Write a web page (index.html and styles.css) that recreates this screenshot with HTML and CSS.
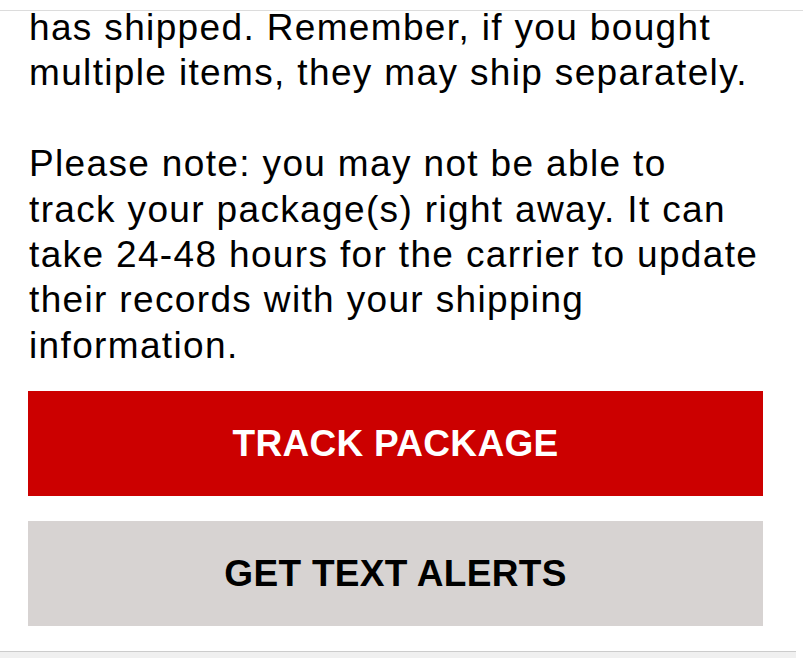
FILE: index.html
```html
<!DOCTYPE html>
<html lang="en">
<head>
<meta charset="utf-8">
<title>Shipping notice</title>
<link rel="stylesheet" href="styles.css">
</head>
<body>
<div class="page">
  <div class="content">
    <p class="copy">has shipped. Remember, if you bought multiple items, they may ship separately.</p>
    <p class="copy">Please note: you may not be able to track your package(s) right away. It can take 24-48 hours for the carrier to update their records with your shipping information.</p>
    <div class="actions">
      <a class="btn btn-primary" href="#">TRACK PACKAGE</a>
      <a class="btn btn-secondary" href="#">GET TEXT ALERTS</a>
    </div>
  </div>
  <div class="footer-bar"></div>
</div>
</body>
</html>
```
FILE: styles.css
```css
html, body {
  margin: 0;
  padding: 0;
  background: #ffffff;
}
body {
  font-family: "Liberation Sans", Arial, sans-serif;
  color: #000000;
  height: 658px;
  overflow: hidden;
}
.page {
  padding-top: 10px;
}
.content {
  border-top: 1px solid #dcdcdc;
  padding: 0 40px 0 28px;
}
.copy {
  margin: -6px 0 45.4px 1px;
  font-size: 37px;
  line-height: 45.4px;
  letter-spacing: 1.35px;
  width: 734px;
}
.copy + .copy {
  margin-top: 0;
  margin-bottom: 23px;
}
.actions {
  display: flex;
  flex-direction: column;
  gap: 25px;
  width: 735px;
  padding-bottom: 25px;
}
.btn {
  display: flex;
  align-items: center;
  justify-content: center;
  height: 105px;
  font-size: 37px;
  font-weight: bold;
  letter-spacing: 0.3px;
  text-decoration: none;
}
.btn-primary {
  background: #cc0000;
  color: #ffffff;
}
.btn-secondary {
  background: #d7d3d2;
  color: #000000;
}
.footer-bar {
  width: 796px;
  height: 8px;
  border-top: 1px solid #cccccc;
  background: #f0f0f0;
}
```
